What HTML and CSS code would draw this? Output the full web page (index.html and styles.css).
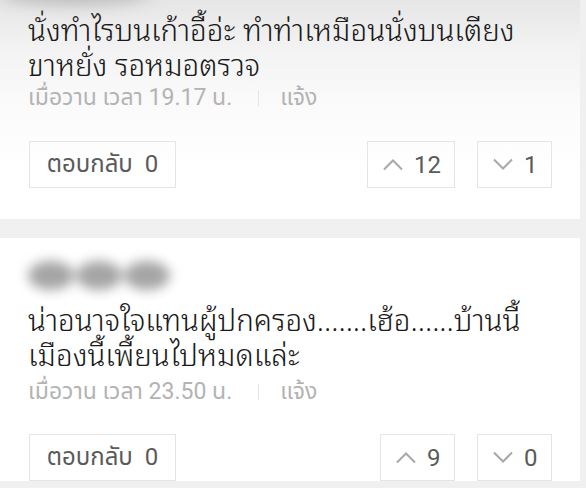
FILE: index.html
```html
<!DOCTYPE html>
<html lang="th">
<head>
<meta charset="utf-8">
<link rel="stylesheet" href="styles.css">
</head>
<body>
<div class="feed">
  <div class="card card-first">
    <div class="top-blur"></div>
    <p class="comment">นั่งทำไรบนเก้าอี้อ่ะ ทำท่าเหมือนนั่งบนเตียง<br>ขาหยั่ง รอหมอตรวจ</p>
    <div class="meta"><span>เมื่อวาน เวลา 19.17 น.</span><span class="sep"></span><span>แจ้ง</span></div>
    <div class="actions">
      <div class="btn reply">ตอบกลับ&nbsp; 0</div>
      <div class="votes">
        <div class="btn vote up"><svg viewBox="0 0 22 13" class="chev"><path d="M2 11.5 L11 2.5 L20 11.5" /></svg><span>12</span></div>
        <div class="btn vote down"><svg viewBox="0 0 22 13" class="chev"><path d="M2 1.5 L11 10.5 L20 1.5" /></svg><span>1</span></div>
      </div>
    </div>
  </div>
  <div class="card card-second">
    <div class="name-blur"><i></i><i></i><i></i></div>
    <p class="comment">น่าอนาจใจแทนผู้ปกครอง.......เฮ้อ......บ้านนี้<br>เมืองนี้เพี้ยนไปหมดแล่ะ</p>
    <div class="meta"><span>เมื่อวาน เวลา 23.50 น.</span><span class="sep"></span><span>แจ้ง</span></div>
    <div class="actions">
      <div class="btn reply">ตอบกลับ&nbsp; 0</div>
      <div class="votes">
        <div class="btn vote up"><svg viewBox="0 0 22 13" class="chev"><path d="M2 11.5 L11 2.5 L20 11.5" /></svg><span>9</span></div>
        <div class="btn vote down"><svg viewBox="0 0 22 13" class="chev"><path d="M2 1.5 L11 10.5 L20 1.5" /></svg><span>0</span></div>
      </div>
    </div>
  </div>
</div>
</body>
</html>
```
FILE: styles.css
```css
html, body {
  margin: 0;
  padding: 0;
}
body {
  background: #f0f0f0;
  width: 586px;
  height: 488px;
  overflow: hidden;
  font-family: "Noto Sans Thai Looped", "Noto Sans", sans-serif;
}
.feed {
  display: flex;
  flex-direction: column;
  gap: 19px;
}
.card {
  box-sizing: border-box;
  width: 580px;
  padding: 0 28px 0 28px;
  background: #fff;
  position: relative;
}
.card-first {
  padding-top: 10px;
  padding-bottom: 31px;
  background: linear-gradient(#e6e6e6 0px, #f3f3f3 50px, #fbfbfb 110px, #ffffff 170px);
}
.card-second {
  padding-top: 23px;
}
.top-blur {
  position: absolute;
  left: 0;
  top: -16px;
  width: 150px;
  height: 20px;
  border-radius: 50%;
  background: #b8b8b8;
  filter: blur(8px);
}
.comment {
  margin: 0;
  font-size: 29.5px;
  font-weight: 350;
  line-height: 35px;
  color: #1a1a1a;
  white-space: nowrap;
}
.card-second .comment {
  margin-top: -2px;
}
.meta {
  display: flex;
  align-items: center;
  margin-top: 5px;
  font-size: 23px;
  line-height: 26px;
  color: #b3b3b3;
  font-family: Roboto, "Noto Sans Thai", "Noto Sans", sans-serif;
}
.card-second .meta {
  margin-top: 9px;
}
.meta .sep {
  width: 1px;
  height: 16px;
  background: #e4e4e4;
  margin: 0 21px 0 26px;
}
.actions {
  display: flex;
  justify-content: space-between;
  margin-top: 30px;
}
.card-second .actions {
  margin-top: 29px;
}
.votes {
  display: flex;
  gap: 22px;
}
.btn {
  box-sizing: border-box;
  height: 47px;
  border: 1px solid #e5e5e5;
  display: flex;
  align-items: center;
  font-family: Roboto, "Noto Sans Thai", "Noto Sans", sans-serif;
  color: #5a5a5a;
}
.reply {
  width: 147px;
  justify-content: center;
  font-size: 24px;
  margin-left: 1px;
}
.vote {
  padding-left: 14px;
  gap: 10px;
  font-size: 24px;
}
.up {
  width: 88px;
}
.card-second .up {
  width: 75px;
}
.down {
  width: 75px;
}
.chev {
  width: 22px;
  height: 13px;
  fill: none;
  stroke: #a8a8a8;
  stroke-width: 2;
}
.name-blur {
  display: flex;
  gap: 2px;
  height: 29px;
  margin-bottom: 12px;
  filter: blur(6px);
}
.name-blur i {
  display: block;
  width: 46px;
  height: 29px;
  border-radius: 50%;
  background: #a5a5a5;
}
```
